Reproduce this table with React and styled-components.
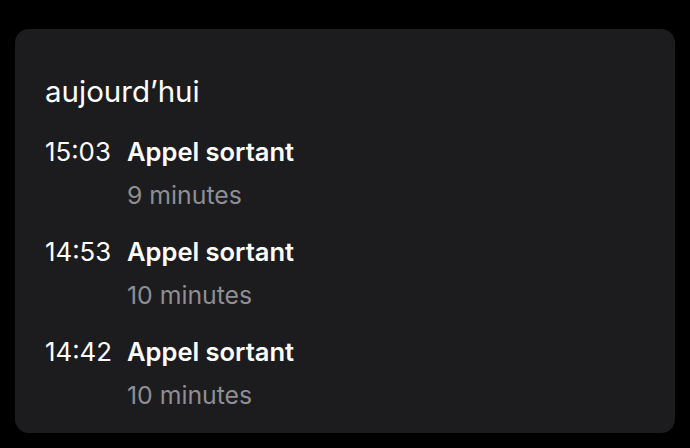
import React from "react";
import styled, { createGlobalStyle } from "styled-components";

const GlobalStyle = createGlobalStyle`
  html, body {
    margin: 0;
    padding: 0;
    background: #000;
    font-family: Inter, "Noto Sans", sans-serif;
    -webkit-font-smoothing: antialiased;
  }
`;

const Page = styled.div`
  width: 690px;
  height: 448px;
  box-sizing: border-box;
  padding: 29px 15px 15px 15px;
  background: #000;
`;

const Card = styled.div`
  background: #1c1c1e;
  border-radius: 14px;
  height: 404px;
  box-sizing: border-box;
  padding: 47px 30px 0 30px;
`;

const Heading = styled.div`
  color: #fff;
  font-size: 29.5px;
  font-weight: 400;
  line-height: 30px;
  margin-bottom: 33px;
`;

const List = styled.div`
  display: flex;
  flex-direction: column;
  gap: 31px;
`;

const Row = styled.div`
  display: grid;
  grid-template-columns: 82px 1fr;
  row-gap: 17px;
`;

const Time = styled.div`
  color: #fff;
  font-size: 25.8px;
  line-height: 26px;
`;

const Title = styled.div`
  color: #fff;
  font-size: 25.5px;
  font-weight: 600;
  line-height: 26px;
`;

const Duration = styled.div`
  grid-column: 2;
  color: #8e8e93;
  font-size: 24.8px;
  line-height: 26px;
`;

const calls = [
  { time: "15:03", title: "Appel sortant", duration: "9 minutes" },
  { time: "14:53", title: "Appel sortant", duration: "10 minutes" },
  { time: "14:42", title: "Appel sortant", duration: "10 minutes" },
];

export default function App() {
  return (
    <Page>
      <GlobalStyle />
      <Card>
        <Heading>aujourd’hui</Heading>
        <List>
          {calls.map((c, i) => (
            <Row key={i}>
              <Time>{c.time}</Time>
              <Title>{c.title}</Title>
              <Duration>{c.duration}</Duration>
            </Row>
          ))}
        </List>
      </Card>
    </Page>
  );
}
